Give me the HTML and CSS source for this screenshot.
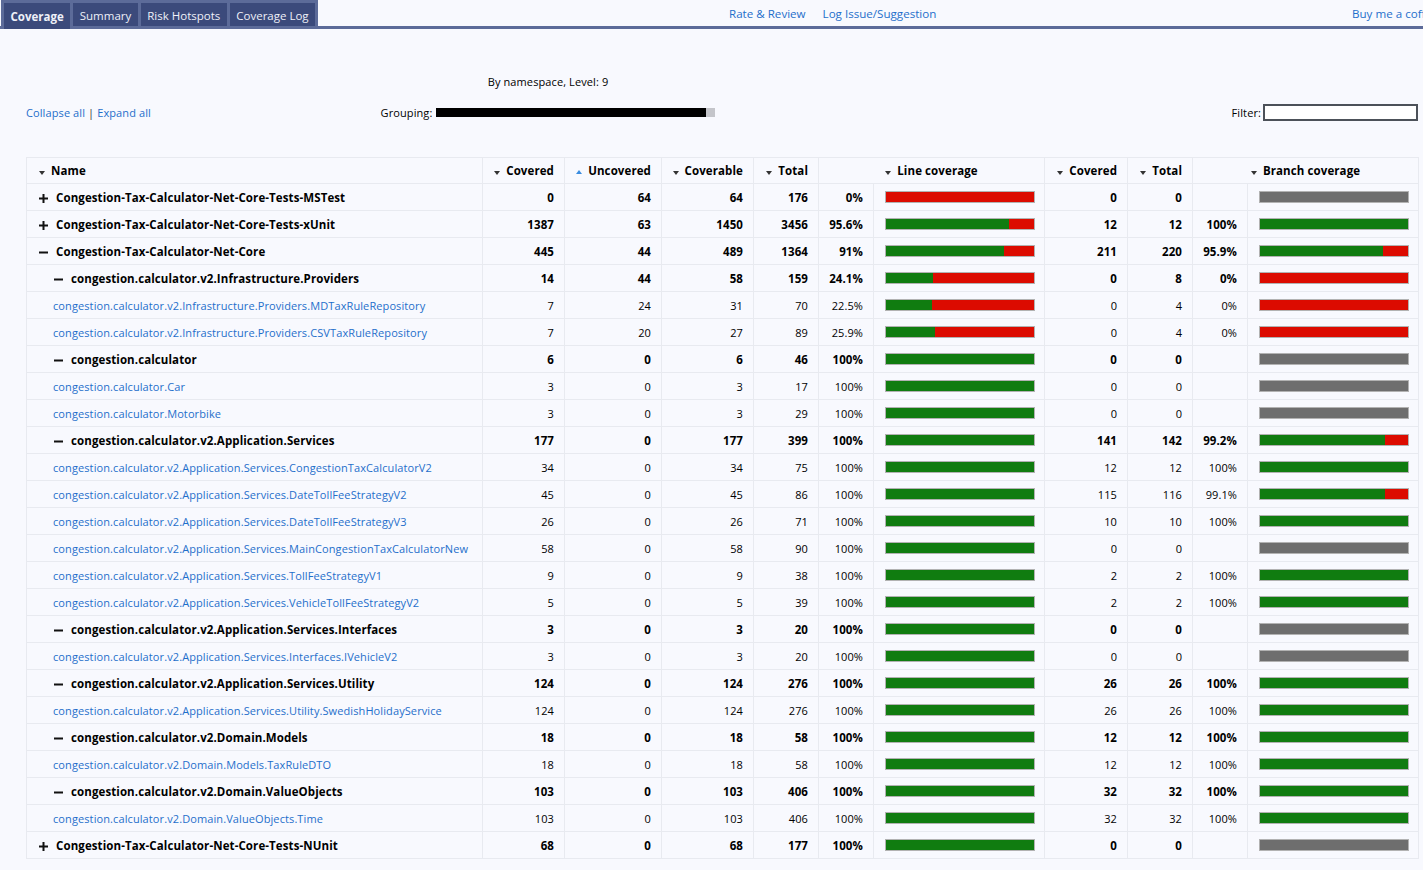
FILE: index.html
```html
<!DOCTYPE html>
<html lang="en">
<head>
<meta charset="utf-8">
<title>Coverage</title>
<link rel="stylesheet" href="styles.css">
</head>
<body>
<div class="topbar">
  <div class="tabcol">
    <div class="tabs">
      <a class="tab active" href="#">Coverage</a>
      <a class="tab" href="#">Summary</a>
      <a class="tab" href="#">Risk Hotspots</a>
      <a class="tab" href="#">Coverage Log</a>
    </div>
  </div>
  <div class="toplinks">
    <a href="#">Rate &amp; Review</a>
    <a href="#">Log Issue/Suggestion</a>
  </div>
  <div class="coffee"><a href="#">Buy me a coffee</a></div>
</div>

<div class="content">
  <div class="toolbar">
    <div class="tool-left"><a href="#">Collapse all</a> <span class="sep">|</span> <a href="#">Expand all</a></div>
    <div class="tool-center">
      <div class="level">By namespace, Level: 9</div>
      <div class="grouping"><span>Grouping:</span><div class="slider"><div class="thumb"></div></div></div>
    </div>
    <div class="tool-empty"></div>
    <div class="tool-right"><span>Filter:</span><span class="filter"></span></div>
  </div>

  <table class="cov">
    <colgroup>
      <col class="c-name"><col class="c-cov"><col class="c-unc"><col class="c-coverable"><col class="c-tot"><col class="c-pct"><col class="c-bar"><col class="c-bcov"><col class="c-btot"><col class="c-pct"><col class="c-bar">
    </colgroup>
    <thead>
      <tr>
        <th class="left"><i class="down"></i>Name</th>
        <th><i class="down"></i>Covered</th>
        <th><i class="up"></i>Uncovered</th>
        <th><i class="down"></i>Coverable</th>
        <th><i class="down"></i>Total</th>
        <th class="center" colspan="2"><i class="down"></i>Line coverage</th>
        <th><i class="down"></i>Covered</th>
        <th><i class="down"></i>Total</th>
        <th class="center" colspan="2"><i class="down"></i>Branch coverage</th>
      </tr>
    </thead>
    <tbody>
      <tr class="grp">
        <td class="name l1"><svg class="ico" width="9" height="9" viewBox="0 0 9 9"><rect x="0" y="3.5" width="9" height="2"/><rect x="3.5" y="0" width="2" height="9"/></svg>Congestion-Tax-Calculator-Net-Core-Tests-MSTest</td>
        <td>0</td><td>64</td><td>64</td><td>176</td><td>0%</td>
        <td class="barcell"><div class="bar red"><div class="fill" style="width:0px"></div></div></td>
        <td>0</td><td>0</td><td></td>
        <td class="barcell"><div class="bar gray"></div></td>
      </tr>
      <tr class="grp">
        <td class="name l1"><svg class="ico" width="9" height="9" viewBox="0 0 9 9"><rect x="0" y="3.5" width="9" height="2"/><rect x="3.5" y="0" width="2" height="9"/></svg>Congestion-Tax-Calculator-Net-Core-Tests-xUnit</td>
        <td>1387</td><td>63</td><td>1450</td><td>3456</td><td>95.6%</td>
        <td class="barcell"><div class="bar red"><div class="fill" style="width:123px"></div></div></td>
        <td>12</td><td>12</td><td>100%</td>
        <td class="barcell"><div class="bar red"><div class="fill" style="width:148px"></div></div></td>
      </tr>
      <tr class="grp">
        <td class="name l1"><svg class="ico" width="9" height="9" viewBox="0 0 9 9"><rect x="0" y="3.5" width="9" height="2"/></svg>Congestion-Tax-Calculator-Net-Core</td>
        <td>445</td><td>44</td><td>489</td><td>1364</td><td>91%</td>
        <td class="barcell"><div class="bar red"><div class="fill" style="width:118px"></div></div></td>
        <td>211</td><td>220</td><td>95.9%</td>
        <td class="barcell"><div class="bar red"><div class="fill" style="width:123px"></div></div></td>
      </tr>
      <tr class="grp">
        <td class="name l2"><svg class="ico" width="9" height="9" viewBox="0 0 9 9"><rect x="0" y="3.5" width="9" height="2"/></svg>congestion.calculator.v2.Infrastructure.Providers</td>
        <td>14</td><td>44</td><td>58</td><td>159</td><td>24.1%</td>
        <td class="barcell"><div class="bar red"><div class="fill" style="width:47px"></div></div></td>
        <td>0</td><td>8</td><td>0%</td>
        <td class="barcell"><div class="bar red"><div class="fill" style="width:0px"></div></div></td>
      </tr>
      <tr>
        <td class="name leaf"><a href="#">congestion.calculator.v2.Infrastructure.Providers.MDTaxRuleRepository</a></td>
        <td>7</td><td>24</td><td>31</td><td>70</td><td>22.5%</td>
        <td class="barcell"><div class="bar red"><div class="fill" style="width:46px"></div></div></td>
        <td>0</td><td>4</td><td>0%</td>
        <td class="barcell"><div class="bar red"><div class="fill" style="width:0px"></div></div></td>
      </tr>
      <tr>
        <td class="name leaf"><a href="#">congestion.calculator.v2.Infrastructure.Providers.CSVTaxRuleRepository</a></td>
        <td>7</td><td>20</td><td>27</td><td>89</td><td>25.9%</td>
        <td class="barcell"><div class="bar red"><div class="fill" style="width:49px"></div></div></td>
        <td>0</td><td>4</td><td>0%</td>
        <td class="barcell"><div class="bar red"><div class="fill" style="width:0px"></div></div></td>
      </tr>
      <tr class="grp">
        <td class="name l2"><svg class="ico" width="9" height="9" viewBox="0 0 9 9"><rect x="0" y="3.5" width="9" height="2"/></svg>congestion.calculator</td>
        <td>6</td><td>0</td><td>6</td><td>46</td><td>100%</td>
        <td class="barcell"><div class="bar red"><div class="fill" style="width:148px"></div></div></td>
        <td>0</td><td>0</td><td></td>
        <td class="barcell"><div class="bar gray"></div></td>
      </tr>
      <tr>
        <td class="name leaf"><a href="#">congestion.calculator.Car</a></td>
        <td>3</td><td>0</td><td>3</td><td>17</td><td>100%</td>
        <td class="barcell"><div class="bar red"><div class="fill" style="width:148px"></div></div></td>
        <td>0</td><td>0</td><td></td>
        <td class="barcell"><div class="bar gray"></div></td>
      </tr>
      <tr>
        <td class="name leaf"><a href="#">congestion.calculator.Motorbike</a></td>
        <td>3</td><td>0</td><td>3</td><td>29</td><td>100%</td>
        <td class="barcell"><div class="bar red"><div class="fill" style="width:148px"></div></div></td>
        <td>0</td><td>0</td><td></td>
        <td class="barcell"><div class="bar gray"></div></td>
      </tr>
      <tr class="grp">
        <td class="name l2"><svg class="ico" width="9" height="9" viewBox="0 0 9 9"><rect x="0" y="3.5" width="9" height="2"/></svg>congestion.calculator.v2.Application.Services</td>
        <td>177</td><td>0</td><td>177</td><td>399</td><td>100%</td>
        <td class="barcell"><div class="bar red"><div class="fill" style="width:148px"></div></div></td>
        <td>141</td><td>142</td><td>99.2%</td>
        <td class="barcell"><div class="bar red"><div class="fill" style="width:125px"></div></div></td>
      </tr>
      <tr>
        <td class="name leaf"><a href="#">congestion.calculator.v2.Application.Services.CongestionTaxCalculatorV2</a></td>
        <td>34</td><td>0</td><td>34</td><td>75</td><td>100%</td>
        <td class="barcell"><div class="bar red"><div class="fill" style="width:148px"></div></div></td>
        <td>12</td><td>12</td><td>100%</td>
        <td class="barcell"><div class="bar red"><div class="fill" style="width:148px"></div></div></td>
      </tr>
      <tr>
        <td class="name leaf"><a href="#">congestion.calculator.v2.Application.Services.DateTollFeeStrategyV2</a></td>
        <td>45</td><td>0</td><td>45</td><td>86</td><td>100%</td>
        <td class="barcell"><div class="bar red"><div class="fill" style="width:148px"></div></div></td>
        <td>115</td><td>116</td><td>99.1%</td>
        <td class="barcell"><div class="bar red"><div class="fill" style="width:125px"></div></div></td>
      </tr>
      <tr>
        <td class="name leaf"><a href="#">congestion.calculator.v2.Application.Services.DateTollFeeStrategyV3</a></td>
        <td>26</td><td>0</td><td>26</td><td>71</td><td>100%</td>
        <td class="barcell"><div class="bar red"><div class="fill" style="width:148px"></div></div></td>
        <td>10</td><td>10</td><td>100%</td>
        <td class="barcell"><div class="bar red"><div class="fill" style="width:148px"></div></div></td>
      </tr>
      <tr>
        <td class="name leaf"><a href="#">congestion.calculator.v2.Application.Services.MainCongestionTaxCalculatorNew</a></td>
        <td>58</td><td>0</td><td>58</td><td>90</td><td>100%</td>
        <td class="barcell"><div class="bar red"><div class="fill" style="width:148px"></div></div></td>
        <td>0</td><td>0</td><td></td>
        <td class="barcell"><div class="bar gray"></div></td>
      </tr>
      <tr>
        <td class="name leaf"><a href="#">congestion.calculator.v2.Application.Services.TollFeeStrategyV1</a></td>
        <td>9</td><td>0</td><td>9</td><td>38</td><td>100%</td>
        <td class="barcell"><div class="bar red"><div class="fill" style="width:148px"></div></div></td>
        <td>2</td><td>2</td><td>100%</td>
        <td class="barcell"><div class="bar red"><div class="fill" style="width:148px"></div></div></td>
      </tr>
      <tr>
        <td class="name leaf"><a href="#">congestion.calculator.v2.Application.Services.VehicleTollFeeStrategyV2</a></td>
        <td>5</td><td>0</td><td>5</td><td>39</td><td>100%</td>
        <td class="barcell"><div class="bar red"><div class="fill" style="width:148px"></div></div></td>
        <td>2</td><td>2</td><td>100%</td>
        <td class="barcell"><div class="bar red"><div class="fill" style="width:148px"></div></div></td>
      </tr>
      <tr class="grp">
        <td class="name l2"><svg class="ico" width="9" height="9" viewBox="0 0 9 9"><rect x="0" y="3.5" width="9" height="2"/></svg>congestion.calculator.v2.Application.Services.Interfaces</td>
        <td>3</td><td>0</td><td>3</td><td>20</td><td>100%</td>
        <td class="barcell"><div class="bar red"><div class="fill" style="width:148px"></div></div></td>
        <td>0</td><td>0</td><td></td>
        <td class="barcell"><div class="bar gray"></div></td>
      </tr>
      <tr>
        <td class="name leaf"><a href="#">congestion.calculator.v2.Application.Services.Interfaces.IVehicleV2</a></td>
        <td>3</td><td>0</td><td>3</td><td>20</td><td>100%</td>
        <td class="barcell"><div class="bar red"><div class="fill" style="width:148px"></div></div></td>
        <td>0</td><td>0</td><td></td>
        <td class="barcell"><div class="bar gray"></div></td>
      </tr>
      <tr class="grp">
        <td class="name l2"><svg class="ico" width="9" height="9" viewBox="0 0 9 9"><rect x="0" y="3.5" width="9" height="2"/></svg>congestion.calculator.v2.Application.Services.Utility</td>
        <td>124</td><td>0</td><td>124</td><td>276</td><td>100%</td>
        <td class="barcell"><div class="bar red"><div class="fill" style="width:148px"></div></div></td>
        <td>26</td><td>26</td><td>100%</td>
        <td class="barcell"><div class="bar red"><div class="fill" style="width:148px"></div></div></td>
      </tr>
      <tr>
        <td class="name leaf"><a href="#">congestion.calculator.v2.Application.Services.Utility.SwedishHolidayService</a></td>
        <td>124</td><td>0</td><td>124</td><td>276</td><td>100%</td>
        <td class="barcell"><div class="bar red"><div class="fill" style="width:148px"></div></div></td>
        <td>26</td><td>26</td><td>100%</td>
        <td class="barcell"><div class="bar red"><div class="fill" style="width:148px"></div></div></td>
      </tr>
      <tr class="grp">
        <td class="name l2"><svg class="ico" width="9" height="9" viewBox="0 0 9 9"><rect x="0" y="3.5" width="9" height="2"/></svg>congestion.calculator.v2.Domain.Models</td>
        <td>18</td><td>0</td><td>18</td><td>58</td><td>100%</td>
        <td class="barcell"><div class="bar red"><div class="fill" style="width:148px"></div></div></td>
        <td>12</td><td>12</td><td>100%</td>
        <td class="barcell"><div class="bar red"><div class="fill" style="width:148px"></div></div></td>
      </tr>
      <tr>
        <td class="name leaf"><a href="#">congestion.calculator.v2.Domain.Models.TaxRuleDTO</a></td>
        <td>18</td><td>0</td><td>18</td><td>58</td><td>100%</td>
        <td class="barcell"><div class="bar red"><div class="fill" style="width:148px"></div></div></td>
        <td>12</td><td>12</td><td>100%</td>
        <td class="barcell"><div class="bar red"><div class="fill" style="width:148px"></div></div></td>
      </tr>
      <tr class="grp">
        <td class="name l2"><svg class="ico" width="9" height="9" viewBox="0 0 9 9"><rect x="0" y="3.5" width="9" height="2"/></svg>congestion.calculator.v2.Domain.ValueObjects</td>
        <td>103</td><td>0</td><td>103</td><td>406</td><td>100%</td>
        <td class="barcell"><div class="bar red"><div class="fill" style="width:148px"></div></div></td>
        <td>32</td><td>32</td><td>100%</td>
        <td class="barcell"><div class="bar red"><div class="fill" style="width:148px"></div></div></td>
      </tr>
      <tr>
        <td class="name leaf"><a href="#">congestion.calculator.v2.Domain.ValueObjects.Time</a></td>
        <td>103</td><td>0</td><td>103</td><td>406</td><td>100%</td>
        <td class="barcell"><div class="bar red"><div class="fill" style="width:148px"></div></div></td>
        <td>32</td><td>32</td><td>100%</td>
        <td class="barcell"><div class="bar red"><div class="fill" style="width:148px"></div></div></td>
      </tr>
      <tr class="grp">
        <td class="name l1"><svg class="ico" width="9" height="9" viewBox="0 0 9 9"><rect x="0" y="3.5" width="9" height="2"/><rect x="3.5" y="0" width="2" height="9"/></svg>Congestion-Tax-Calculator-Net-Core-Tests-NUnit</td>
        <td>68</td><td>0</td><td>68</td><td>177</td><td>100%</td>
        <td class="barcell"><div class="bar red"><div class="fill" style="width:148px"></div></div></td>
        <td>0</td><td>0</td><td></td>
        <td class="barcell"><div class="bar gray"></div></td>
      </tr>
    </tbody>
  </table>
</div>
</body>
</html>
```

FILE: styles.css
```css
html, body {
  margin: 0;
  padding: 0;
}
body {
  background: #f8f9fe;
  color: #000;
  font-family: "Open Sans", "Noto Sans", sans-serif;
  font-size: 11px;
  letter-spacing: 0.1px;
  overflow: hidden;
}
a {
  color: #1f6fcb;
  text-decoration: none;
}

/* top bar */
.topbar {
  display: grid;
  grid-template-columns: 729px 623px minmax(0, 1fr);
  height: 26px;
  border-bottom: 3px solid #5c6b99;
  white-space: nowrap;
}
.tabcol {
  display: flex;
  align-items: flex-start;
}
.tabs {
  flex: none;
  display: flex;
  align-items: flex-start;
  gap: 3px;
  background: #5c6b99;
  margin-left: 1px;
  padding: 3px 3px 0;
  height: 23px;
}
.tab {
  display: block;
  height: 23px;
  box-sizing: border-box;
  padding: 4px 6.5px 0;
  background: #3b4a7b;
  color: #eef0f8;
  font-size: 11.5px;
  letter-spacing: 0;
  line-height: 18px;
}
.tab.active {
  height: 26px;
  font-weight: bold;
  padding-top: 5px;
}
.toplinks {
  display: flex;
  gap: 17px;
  font-size: 11.6px;
  letter-spacing: 0;
  line-height: 18px;
  padding-top: 5px;
}
.coffee {
  overflow: hidden;
  font-size: 11.6px;
  letter-spacing: 0;
  line-height: 18px;
  padding-top: 5px;
}

/* content */
.content {
  padding: 0 5px 0 26px;
}
.toolbar {
  display: grid;
  grid-template-columns: 1fr 1fr 1fr 1fr;
  align-items: end;
  margin-top: 45px;
}
.tool-left {
  line-height: 17px;
}
.sep {
  color: #333;
}
.tool-center {
  display: flex;
  flex-direction: column;
  align-items: center;
}
.level {
  line-height: 16px;
  margin-bottom: 14px;
}
.grouping {
  display: flex;
  align-items: center;
  gap: 4px;
  height: 17px;
}
.slider {
  width: 279px;
  height: 9px;
  background: #000;
  display: flex;
  justify-content: flex-end;
}
.thumb {
  width: 9px;
  height: 9px;
  background: #c4c5ca;
}
.tool-right {
  display: flex;
  justify-content: flex-end;
  align-items: center;
  gap: 2px;
  height: 17px;
}
.filter {
  display: block;
  width: 151px;
  height: 13px;
  border: 2px solid #4c5159;
  background: #fff;
}

/* table */
.cov {
  margin-top: 36px;
  width: 1392px;
  border-collapse: collapse;
  table-layout: fixed;
}
.c-name { width: 456px; }
.c-cov { width: 82px; }
.c-unc { width: 97px; }
.c-coverable { width: 92px; }
.c-tot { width: 65px; }
.c-pct { width: 55px; }
.c-bar { width: 171px; }
.c-bcov { width: 83px; }
.c-btot { width: 65px; }

.cov th, .cov td {
  border: 1px solid #e8eaf0;
  height: 27px;
  padding: 0 10px;
  text-align: right;
  white-space: nowrap;
  overflow: hidden;
  box-sizing: border-box;
}
.cov th {
  height: 26px;
  font-weight: bold;
  font-size: 11.5px;
}
.cov th.left { text-align: left; padding-left: 12px; }
.cov th.center { text-align: center; }
.cov td.name {
  text-align: left;
}
.cov tr.grp td {
  font-weight: bold;
  font-size: 11.5px;
}
.cov td.l1 { padding-left: 12px; }
.cov td.l2 { padding-left: 27px; }
.cov td.leaf { padding-left: 26px; }

.ico {
  display: inline-block;
  vertical-align: -1px;
  margin-right: 8px;
  fill: #111;
}

i.down, i.up {
  display: inline-block;
  width: 0;
  height: 0;
  border-left: 3.5px solid transparent;
  border-right: 3.5px solid transparent;
  margin-right: 6px;
  vertical-align: 0px;
}
i.down {
  border-top: 4px solid #333;
}
i.up {
  border-bottom: 4px solid #3a8ce0;
  vertical-align: 1px;
}

.cov td.barcell {
  padding: 0 10px 0 11px;
}
.bar {
  width: 150px;
  height: 12px;
  box-sizing: border-box;
  border: 1px solid #b2b2b2;
  display: flex;
}
.bar.red { background: #dc0b00; }
.bar.gray { background: #6e6e6e; }
.fill {
  height: 100%;
  background: #107c10;
}
```
